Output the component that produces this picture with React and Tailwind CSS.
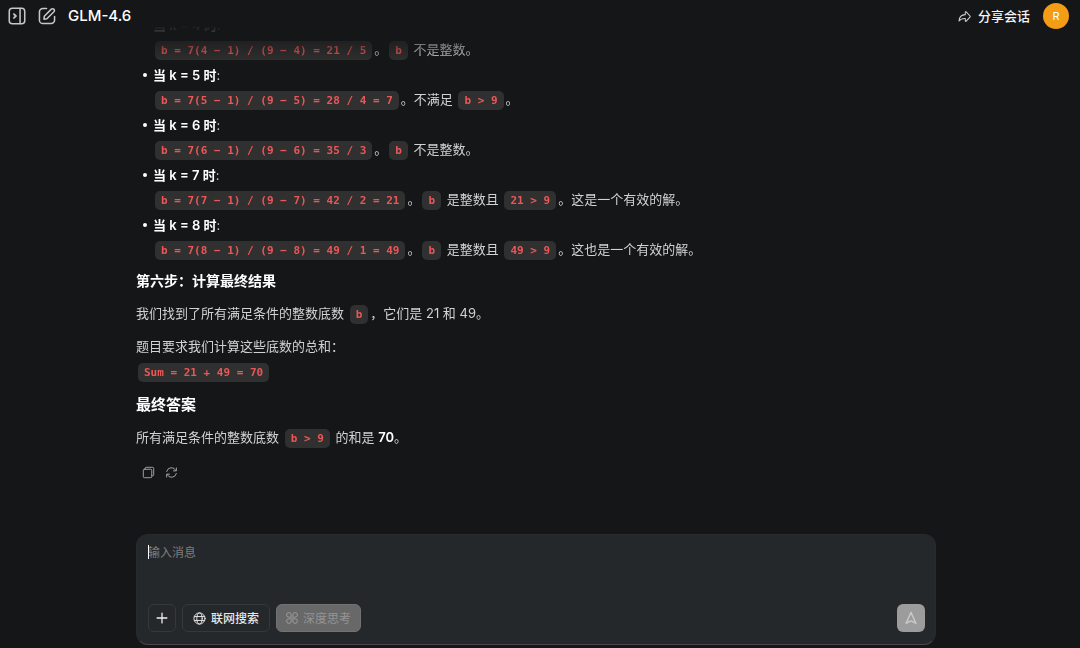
import React from "react";

const Code = ({ children }) => (
  <code className="mx-[2px] rounded-[5px] bg-[#303030] px-[6px] py-[3px] font-['DejaVu_Sans_Mono',monospace] text-[11px] font-bold leading-[18px] text-[#eb5757]">
    {children}
  </code>
);

const cases = [
  { k: 4, body: <><Code>b = 7(4 − 1) / (9 − 4) = 21 / 5</Code>。<Code>b</Code> 不是整数。</> },
  { k: 5, body: <><Code>b = 7(5 − 1) / (9 − 5) = 28 / 4 = 7</Code>。不满足 <Code>{"b > 9"}</Code>。</> },
  { k: 6, body: <><Code>b = 7(6 − 1) / (9 − 6) = 35 / 3</Code>。<Code>b</Code> 不是整数。</> },
  { k: 7, body: <><Code>b = 7(7 − 1) / (9 − 7) = 42 / 2 = 21</Code>。<Code>b</Code> 是整数且 <Code>{"21 > 9"}</Code>。这是一个有效的解。</> },
  { k: 8, body: <><Code>b = 7(8 − 1) / (9 − 8) = 49 / 1 = 49</Code>。<Code>b</Code> 是整数且 <Code>{"49 > 9"}</Code>。这也是一个有效的解。</> },
];

const Icon = ({ className, children, strokeWidth = 1.5 }) => (
  <svg className={className} viewBox="0 0 20 20" fill="none" stroke="currentColor" strokeWidth={strokeWidth} strokeLinecap="round" strokeLinejoin="round" aria-hidden="true">
    {children}
  </svg>
);

function Header() {
  return (
    <header className="flex h-8 shrink-0 items-center justify-between pl-2 pr-[11px]">
      <div className="flex items-center gap-3">
        <button type="button" aria-label="展开侧栏" className="text-[#c6c7c8]">
          <Icon className="size-[18px]" strokeWidth={1.7}>
            <rect x="1.4" y="1.4" width="17.2" height="17.2" rx="3.4" />
            <path d="M13.4 1.6v16.8" />
            <path d="M6.6 7.8 8.8 10 6.6 12.2" strokeWidth="2" />
          </Icon>
        </button>
        <button type="button" aria-label="新建会话" className="text-[#c6c7c8]">
          <Icon className="size-[18px]" strokeWidth={1.7}>
            <path d="M9.5 1.6H5.4a3.8 3.8 0 0 0-3.8 3.8v9.2a3.8 3.8 0 0 0 3.8 3.8h9.2a3.8 3.8 0 0 0 3.8-3.8v-4.1" />
            <path d="m7 10.2 7.8-7.8a1.9 1.9 0 0 1 2.7 0l.2.2a1.9 1.9 0 0 1 0 2.7L9.9 13.1 6.6 13.6Z" />
          </Icon>
        </button>
        <h1 className="text-[15px] font-medium leading-5 text-white">GLM-4.6</h1>
      </div>
      <div className="flex items-center gap-[13px]">
        <button type="button" className="flex items-center gap-[7px] text-[13px] font-medium leading-5 text-[#f4f4f4]">
          <Icon className="size-[13px] text-[#d0d0d0]" strokeWidth={1.6}>
            <path d="M11.2 3.4v3.7C5.3 7.4 1.8 10.6 1.6 17c2.2-3 5.3-4.2 9.6-4v3.6c0 .9.9 1.2 1.5.6l5.7-6.3a1.2 1.2 0 0 0 0-1.7l-5.7-6.3c-.6-.7-1.5-.4-1.5.5Z" />
          </Icon>
          分享会话
        </button>
        <div className="flex size-[26px] items-center justify-center rounded-full bg-[#f39c16] text-[11px] text-white">R</div>
      </div>
    </header>
  );
}

function Answer() {
  return (
    <article>
      <ul>
        {cases.map(({ k, body }) => (
          <li key={k} className="flex pt-[2px] leading-6">
            <span className="flex h-6 w-[17px] items-center justify-center" aria-hidden="true">
              <span className="size-1 rounded-full bg-white" />
            </span>
            <div>
              <p><strong className="font-semibold text-white">当 k = {k} 时</strong>:</p>
              <p>{body}</p>
            </div>
          </li>
        ))}
      </ul>
      <h4 className="mt-2 text-[14px] font-semibold leading-6 text-white">第六步：计算最终结果</h4>
      <p className="mt-2">我们找到了所有满足条件的整数底数 <Code>b</Code>，它们是 21 和 49。</p>
      <p className="mt-2">题目要求我们计算这些底数的总和：</p>
      <p><Code>Sum = 21 + 49 = 70</Code></p>
      <h3 className="mt-2 text-[15px] font-bold leading-[25px] text-white">最终答案</h3>
      <p className="mt-2">所有满足条件的整数底数 <Code>{"b > 9"}</Code> 的和是 <strong className="font-semibold text-white">70</strong>。</p>
    </article>
  );
}

function Composer() {
  return (
    <form className="relative mb-[3px] flex shrink-0 flex-col rounded-xl border border-[#282b2d] border-b-[#46484a] bg-[#25282a] pb-3 pl-[11px] pr-[10px] pt-[9px]" onSubmit={(e) => e.preventDefault()}>
      <label htmlFor="message" className="sr-only">输入消息</label>
      <textarea id="message" placeholder="输入消息" className="h-[60px] w-full resize-none bg-transparent text-[12px] leading-[18px] text-white caret-transparent outline-none placeholder:text-[#7c7e80]" />
      <span className="absolute left-[11px] top-[10px] h-[14px] w-px bg-white" aria-hidden="true" />
      <div className="flex items-center gap-[6px] text-[12px] font-medium">
        <button type="button" aria-label="添加附件" className="flex size-7 items-center justify-center rounded-md border border-[#36393b] text-[#f1f1f1]">
          <Icon className="size-[14px]"><path d="M10 3v14M3 10h14" strokeWidth="1.8" /></Icon>
        </button>
        <button type="button" className="flex h-7 items-center gap-[5px] rounded-md border border-[#36393b] px-[10px] text-[#e6e6e6]">
          <Icon className="size-[13px]" strokeWidth={1.5}>
            <circle cx="10" cy="10" r="8.6" />
            <ellipse cx="10" cy="10" rx="4.2" ry="8.6" />
            <path d="M2.4 7h15.2M2.4 13h15.2" />
          </Icon>
          联网搜索
        </button>
        <button type="button" className="flex h-7 items-center gap-[5px] rounded-md border border-[#727272] bg-[#686868] px-[9px] font-normal text-[#949494]">
          <Icon className="size-[12px] text-[#a2a2a2]" strokeWidth={1.5}>
            <path d="M8.6 7.400V4.800A3.800 3.800 0 1 0 4.800 8.600H7.400L12.600 11.400H15.200A3.800 3.800 0 1 1 11.400 15.200V12.600" />
            <path d="M11.400 7.400V4.800A3.800 3.800 0 1 1 15.200 8.600H12.600M8.600 12.600V15.200A3.800 3.800 0 1 1 4.800 11.400H7.400" />
          </Icon>
          深度思考
        </button>
        <button type="submit" aria-label="发送" className="ml-auto flex size-7 items-center justify-center rounded-md bg-[#9c9c9c] text-[#c9c9c9]">
          <Icon className="size-[14px]" strokeWidth={2}><path d="m10 2 7 15.5-7-3.5-7 3.5Z" /></Icon>
        </button>
      </div>
    </form>
  );
}

export default function App() {
  return (
    <div className="flex h-screen flex-col overflow-hidden bg-[#151618] font-['Inter','Noto_Sans_CJK_SC',sans-serif] text-[13px] leading-[25px] text-[#d2d2d2]" lang="zh-CN">
      <Header />
      <main className="-mt-2 flex min-h-0 flex-1 flex-col pl-4 pr-6">
        <div className="mx-auto flex min-h-0 w-full max-w-[800px] flex-1 flex-col">
          <section className="flex min-h-0 flex-1 flex-col justify-end overflow-hidden pb-[55px] [mask-image:linear-gradient(to_bottom,transparent_2px,black_38px)]">
            <Answer />
            <div className="mt-4 flex gap-[10px] pl-[6px] text-[#a2a2a2]">
              <button type="button" aria-label="复制">
                <Icon className="size-[13px]">
                  <rect x="2" y="5" width="13" height="13" rx="1.5" />
                  <path d="M5 5V3.5A1.5 1.5 0 0 1 6.5 2H16.5A1.5 1.5 0 0 1 18 3.5v10A1.5 1.5 0 0 1 16.5 15H15" />
                </Icon>
              </button>
              <button type="button" aria-label="重新生成">
                <Icon className="size-[13px]">
                  <path d="M2.5 8.5A7.6 7.6 0 0 1 16.8 7M17.5 3v4.5H13M17.5 11.5A7.6 7.6 0 0 1 3.2 13M2.5 17v-4.5H7" />
                </Icon>
              </button>
            </div>
          </section>
          <Composer />
        </div>
      </main>
    </div>
  );
}
